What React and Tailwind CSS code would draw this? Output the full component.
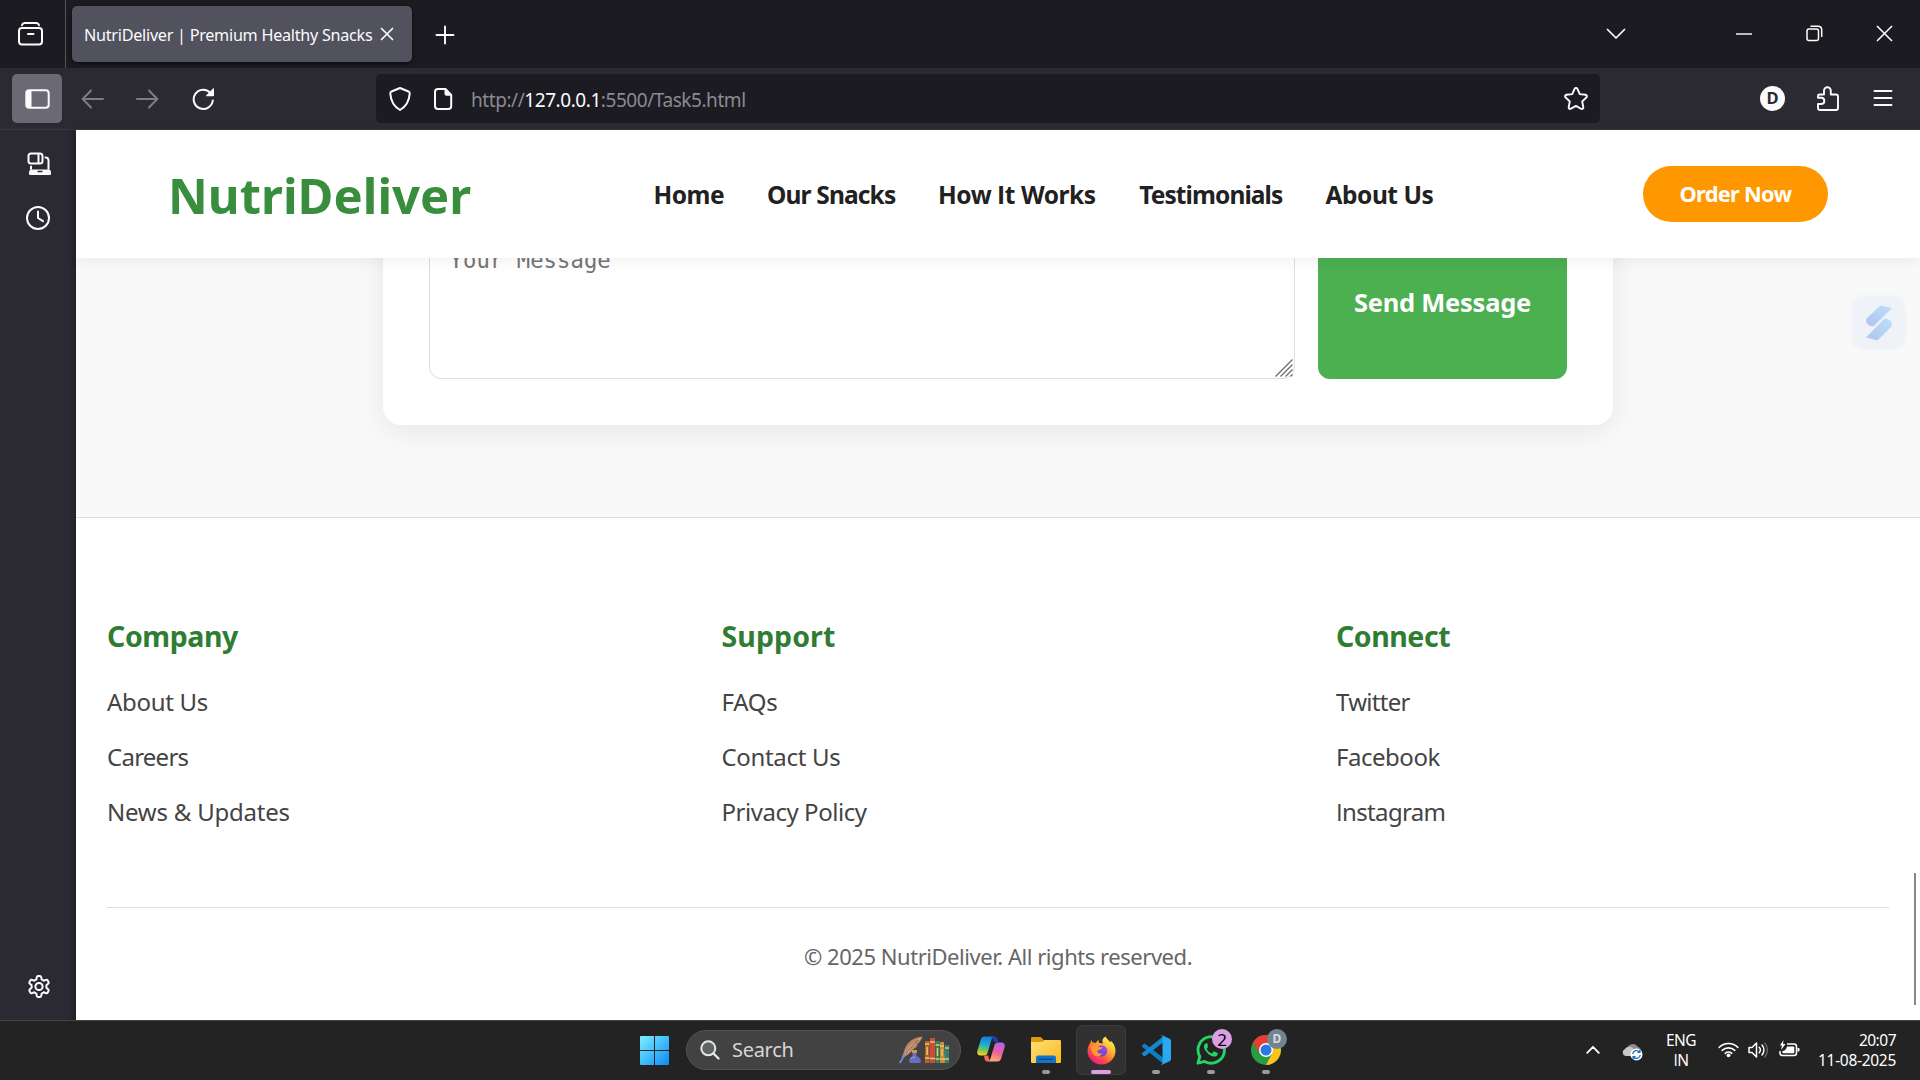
import React from "react";

function Svg({ w, h, vb, className = "", children }) {
  return (
    <svg
      width={w}
      height={h}
      viewBox={vb || `0 0 ${w} ${h}`}
      fill="none"
      className={`shrink-0 ${className}`}
    >
      {children}
    </svg>
  );
}

const line = {
  stroke: "#fbfbfe",
  strokeWidth: 2,
  strokeLinecap: "round",
  strokeLinejoin: "round",
};

// Capital I without serifs.
const I = () => <span className="font-['Open_Sans']">I</span>;

/* ---------- Browser chrome ---------- */

function TabBar() {
  return (
    <div className="flex h-[68px] items-center bg-[#1c1b22]">
      <div className="flex h-full w-[66px] items-center border-r border-[#53525a] pl-[17px]">
        <Svg w={27} h={26}>
          <path d="M5 4.200C5.500 2.600 6.400 2 8 2h11c1.600 0 2.500.6 3 2.200" {...line} />
          <rect x="2" y="7" width="23" height="16.500" rx="3" {...line} />
          <path d="M11 13h5.500" {...line} />
        </Svg>
      </div>
      <div className="ml-[6px] flex h-[56px] w-[340px] items-center rounded-[5px] bg-[#52525e] pl-[12px] shadow-[0_1px_4px_rgba(0,0,0,0.7)]">
        <span className="w-[296px] whitespace-nowrap pt-[1px] text-[16.2px] leading-[24px] tracking-[-0.27px] text-[#fbfbfe]">
          NutriDeliver | Premium Healthy Snacks
        </span>
        <Svg w={14} h={14}>
          <path d="M1.500 1.500l11 11M12.500 1.500l-11 11" {...line} strokeWidth={1.700} />
        </Svg>
      </div>
      <Svg w={20} h={20} className="ml-[23px] mt-[2px]">
        <path d="M10 1.500v17M1.500 10h17" {...line} strokeWidth={1.900} />
      </Svg>
      <div className="ml-auto flex items-center">
        <Svg w={20} h={12}>
          <path d="M1.500 1.500l8.500 8.500 8.500-8.500" {...line} strokeWidth={1.700} />
        </Svg>
        <Svg w={16} h={2} className="-mt-[1px] ml-[110px]">
          <path d="M0 1h16" stroke="#fff" strokeWidth="1.400" />
        </Svg>
        <Svg w={17} h={17} className="-mt-[1px] ml-[54px]">
          <rect x="1" y="4" width="11.500" height="11.500" rx="2" stroke="#fff" strokeWidth="1.500" />
          <path d="M4.500 1.200h7.500c2.200 0 3.700 1.500 3.700 3.700v7" stroke="#fff" strokeWidth="1.500" />
        </Svg>
        <Svg w={17} h={17} className="-mt-[1px] ml-[53px] mr-[27px]">
          <path d="M1 1l15 15M16 1L1 16" stroke="#fff" strokeWidth="1.500" />
        </Svg>
      </div>
    </div>
  );
}

function Toolbar() {
  return (
    <div className="flex h-[62px] items-center border-b border-[#38373f] bg-[#2b2a33]">
      <div className="ml-[12px] flex h-[49px] w-[50px] items-center justify-center rounded-[5px] bg-[#6a6974]">
        <Svg w={25} h={20}>
          <rect x="1.300" y="1.300" width="22.400" height="17.400" rx="3" {...line} />
          <path d="M1.500 3a2 2 0 012-2H6.500v18H3.500a2 2 0 01-2-2z" fill="#fbfbfe" />
        </Svg>
      </div>
      <Svg w={24} h={20} className="ml-[19px]">
        <path d="M22 10H2M10 1.500L1.700 10l8.300 8.500" {...line} stroke="#7d7c84" />
      </Svg>
      <Svg w={24} h={20} className="ml-[30px]">
        <path d="M2 10h20M14 1.500l8.300 8.500-8.300 8.500" {...line} stroke="#7d7c84" />
      </Svg>
      <Svg w={24} h={24} className="ml-[32.500px]">
        <path d="M20.800 13.500A9.600 9.600 0 1 1 18.500 6" {...line} />
        <path d="M21 1.500c.6-.5 1-.2 1 .5v6.500c0 .6-.3.800-.8.800H14.800c-.8 0-1-.5-.5-1z" fill="#fbfbfe" />
      </Svg>
      <div className="ml-[160.500px] flex h-[49px] w-[1224px] items-center rounded-[5px] bg-[#1c1b22] pl-[12px]">
        <Svg w={24} h={26}>
          <path
            d="M12 2l8.500 3.500c.8.300 1.300 1 1.200 2C21.300 14.500 18 20.500 12 24 6 20.500 2.700 14.500 2.300 7.500c-.1-1 .4-1.700 1.200-2z"
            {...line}
          />
        </Svg>
        <Svg w={20} h={24} className="ml-[21px]">
          <path d="M5 2h7.500L18.200 8v11a3 3 0 01-3 3H5a3 3 0 01-3-3V5a3 3 0 013-3z" {...line} />
          <path d="M11.500 2l6.700 6.700h-4.700a2 2 0 01-2-2z" fill="#fbfbfe" />
        </Svg>
        <span className="ml-[18px] whitespace-nowrap pt-[2px] text-[19px] leading-[28px] tracking-[-0.44px] text-[#8b8a92]">
          http://<span className="text-[#fbfbfe]">127.0.0.1</span>:5500/Task5.html
        </span>
        <Svg w={26} h={26} className="ml-auto mr-[11px]">
          <path
            d="M11.600 2.800c.6-1.200 2.200-1.200 2.800 0l2.400 5.300 5.700.7c1.400.2 1.900 1.800.9 2.700l-4.200 3.900 1.100 5.700c.3 1.300-1.100 2.300-2.300 1.600L13 19.900l-5 2.800c-1.200.7-2.600-.3-2.300-1.600l1.100-5.700-4.200-3.900c-1-.9-.5-2.500.9-2.700l5.700-.7z"
            {...line}
            strokeWidth={1.900}
          />
        </Svg>
      </div>
      <div className="ml-[160px] flex size-[25px] items-center justify-center rounded-full bg-[#fbfbfe] text-[16.500px] font-bold leading-none text-[#2b2a33]">
        D
      </div>
      <Svg w={24} h={28} className="ml-[31px]">
        <path
          d="M3.500 9.500H8V5.700a3.400 3.400 0 016.800 0v3.800H20a2 2 0 012 2V23a2 2 0 01-2 2H4a2 2 0 01-2-2v-4h3.200a3.100 3.100 0 000-6.200H2V11a1.500 1.500 0 011.500-1.500z"
          {...line}
          strokeWidth={1.900}
        />
      </Svg>
      <Svg w={20} h={18} className="-mt-[2px] ml-[33px]">
        <path d="M1.500 2h17M1.500 9h17M1.500 16h17" {...line} strokeWidth={1.900} />
      </Svg>
    </div>
  );
}

function Sidebar() {
  return (
    <div className="flex w-[76px] shrink-0 flex-col items-center bg-[linear-gradient(to_right,#2b2a33_68px,#232228_76px)] pt-[21px]">
      <Svg w={26} h={26} className="ml-[2px]">
        <rect x="2.500" y="2.500" width="14" height="10" rx="2.500" {...line} />
        <path d="M12.500 3v9" {...line} />
        <path d="M19.500 6.500c2.500 0 3 1 3 3V18M5 15.500V18" {...line} />
        <path d="M3 21.500c0-2 1-3 3-3h16c2 0 3 1 3 3v1c0 1-.6 1.500-1.500 1.500h-19c-.9 0-1.500-.5-1.500-1.500z" fill="#fbfbfe" />
        <path d="M11.500 20.500h5" stroke="#2b2a33" strokeWidth="1.500" />
      </Svg>
      <Svg w={26} h={26} className="mt-[27.500px]">
        <circle cx="13" cy="13" r="11" {...line} />
        <path d="M13 6.500V13l5 3.200" {...line} />
      </Svg>
      <Svg w={26} h={26} className="mb-[20.500px] ml-[1px] mt-auto">
        <path
          d="M10.700 3.400c.2-1 .7-1.400 1.500-1.400h1.600c.8 0 1.300.4 1.500 1.400l.4 2.100 2 1.200 2.100-.8c.9-.3 1.500-.1 1.900.6l.8 1.400c.4.700.3 1.300-.4 1.900l-1.700 1.500v2.400l1.700 1.500c.7.600.8 1.200.4 1.900l-.8 1.400c-.4.700-1 .9-1.900.6l-2.100-.8-2 1.200-.4 2.100c-.2 1-.7 1.400-1.500 1.400h-1.600c-.8 0-1.300-.4-1.500-1.400l-.4-2.100-2-1.200-2.100.8c-.9.300-1.500.1-1.900-.6l-.8-1.400c-.4-.7-.3-1.300.4-1.900l1.700-1.500v-2.400L3.900 9.800c-.7-.6-.8-1.200-.4-1.900l.8-1.400c.4-.7 1-.9 1.900-.6l2.100.8 2-1.200z"
          {...line}
        />
        <circle cx="13" cy="12.500" r="3.600" {...line} />
      </Svg>
    </div>
  );
}

/* ---------- Web page ---------- */

function SiteHeader() {
  return (
    <header className="relative z-10 flex h-[128px] shrink-0 items-center bg-white shadow-[0_3px_14px_rgba(0,0,0,0.06)]">
      <div className="ml-[92px] w-[485.500px] whitespace-nowrap pt-[1.500px] text-[49px] font-bold leading-[60px] tracking-[0.02px] text-[#388e3c]">
        NutriDeliver
      </div>
      <nav className="flex gap-[43px] whitespace-nowrap pt-[2px] text-[24.5px] font-bold leading-[34px] text-[#212121]">
        <a className="w-[70.5px] tracking-[-0.5px]">Home</a>
        <a className="w-[128px] tracking-[-0.85px]">Our Snacks</a>
        <a className="w-[158.200px] tracking-[-0.45px]">
          How <I />t Works
        </a>
        <a className="w-[143.300px] tracking-[-0.9px]">Testimonials</a>
        <a className="w-[108px] tracking-[-0.45px]">About Us</a>
      </nav>
      <button className="ml-auto mr-[92px] h-[56px] w-[185px] rounded-full bg-[#ff9800] text-[21.8px] font-bold tracking-[-0.7px] text-white">
        Order Now
      </button>
    </header>
  );
}

function ContactSection() {
  return (
    <section className="relative h-[260px] shrink-0 overflow-hidden border-b border-[#ddd] bg-[#f9f9f9]">
      <form className="mx-auto -mt-[40px] flex h-[207px] w-[1230px] rounded-b-[18px] bg-white px-[46px] pb-[46px] shadow-[0_6px_30px_rgba(0,0,0,0.08)]">
        <div className="relative w-[866px] rounded-b-[12px] border border-[#ddd] pl-[19.500px] pt-[28px] font-['DejaVu_Sans_Mono',monospace] text-[22.200px] leading-[26px] tracking-[0.080px] text-[#757575]">
          Your Message
          <Svg w={18} h={18} className="absolute bottom-[1px] right-[1px]">
            <path d="M.5 17.500l17-17M5.500 17.500l12-12M10.500 17.500l7-7M15.500 17.500l2-2" stroke="#6b6b6b" strokeWidth="1.300" />
          </Svg>
        </div>
        <div className="ml-[23px] flex w-[249px] items-center justify-center rounded-b-[12px] bg-[#4caf50] pt-[8px] text-[25.500px] font-bold tracking-[-0.250px] text-white">
          Send Message
        </div>
      </form>
      <div className="absolute right-[15px] top-[38px] flex size-[53px] items-center justify-center rounded-[12px] bg-[#eff3f7] shadow-[0_0_0_3px_#f6f7f9]">
        <Svg w={28} h={36}>
          <defs>
            <linearGradient id="wing" x1="0" y1="1" x2="1" y2="0">
              <stop offset="0" stopColor="#b3c3ee" />
              <stop offset="1" stopColor="#b8e0fa" />
            </linearGradient>
          </defs>
          <path d="M15.500.500L27 3 9 21C4 22.500 0 18 1.500 13.500z" fill="url(#wing)" />
          <path d="M12.500 35.500L1 32.500l18-18.500c5-1.500 9 3 7.500 7.500z" fill="url(#wing)" />
        </Svg>
      </div>
    </section>
  );
}

const columns = [
  {
    title: "Company",
    titleClass: "tracking-[-0.4px]",
    width: "w-[614.5px]",
    links: [
      ["About Us", "tracking-[-0.3px]"],
      ["Careers", "tracking-[-0.75px]"],
      ["News & Updates", "tracking-[-0.22px]"],
    ],
  },
  {
    title: "Support",
    titleClass: "tracking-[0.1px]",
    width: "w-[614.5px]",
    links: [
      ["FAQs", "tracking-[-0.3px]"],
      ["Contact Us", "tracking-[-0.33px]"],
      ["Privacy Policy", "tracking-[-0.46px]"],
    ],
  },
  {
    title: "Connect",
    titleClass: "tracking-[-0.45px]",
    width: "w-[400px]",
    links: [
      ["Twitter", "tracking-[-0.7px]"],
      ["Facebook", "tracking-[-0.48px]"],
      ["Instagram", "tracking-[-0.65px]"],
    ],
  },
];

function SiteFooter() {
  return (
    <footer className="relative flex-1 bg-white px-[31px] pt-[98px]">
      <div className="flex">
        {columns.map((col) => (
          <div key={col.title} className={col.width}>
            <h3 className={`text-[28.5px] font-bold leading-[40px] text-[#2e7d32] ${col.titleClass}`}>{col.title}</h3>
            <ul className="mt-[18px] text-[24px] leading-[55px] text-[#444]">
              {col.links.map(([label, cls]) => (
                <li key={label} className={cls}>
                  {label[0] === "I" ? (
                    <>
                      <I />
                      {label.slice(1)}
                    </>
                  ) : (
                    label
                  )}
                </li>
              ))}
            </ul>
          </div>
        ))}
      </div>
      <p className="mt-[68px] border-t border-[#ddd] pt-[27.500px] text-center text-[22px] leading-[40px] tracking-[-0.46px] text-[#666]">
        © 2025 NutriDeliver. All rights reserved.
      </p>
      <div className="absolute bottom-[15px] right-[4px] h-[132px] w-[2px] bg-[#878787]" />
    </footer>
  );
}

/* ---------- Taskbar ---------- */

function WindowsLogo() {
  return (
    <Svg w={29} h={29}>
      <defs>
        <linearGradient id="win" x1="0" y1="0" x2="29" y2="29" gradientUnits="userSpaceOnUse">
          <stop stopColor="#7df0ff" />
          <stop offset="1" stopColor="#0a8cf5" />
        </linearGradient>
      </defs>
      <path d="M0 1a1 1 0 011-1h13v14H0zM15 0h13a1 1 0 011 1v13H15zM0 15h14v14H1a1 1 0 01-1-1zM15 15h14v13a1 1 0 01-1 1H15z" fill="url(#win)" />
    </Svg>
  );
}

function QuillAndBooks() {
  return (
    <Svg w={51} h={28}>
      <path d="M23.500.500C15 1 7 6 4.500 17l-2 5C8 20 12 17 14 13.500c3-1.500 4.500-3.500 4.500-5.500 2.500-2 4-4 5-7.500z" fill="#b98763" />
      <path d="M22.500 1.500C14 6 9 12 4 21c5-3 7-6 8.500-9 3-2 4-4 4.500-5.500z" fill="#efc7a2" />
      <path d="M19 4C15 8 10 13 6.500 18.500" stroke="#9a6a48" strokeWidth="1.200" />
      <path d="M6.500 18.500C4.500 21 2.500 24 .8 27" stroke="#7387c9" strokeWidth="2" />
      <path d="M13 14h5v3h-5z" fill="#c99a55" />
      <path d="M13.500 17h4v3c3 1 4.500 3 4.300 5.500-.1 1-.8 1.500-1.800 1.500h-8c-1 0-1.700-.5-1.800-1.500C10 23 11 21 13.500 20z" fill="#6670c0" />
      <path d="M12 23c1-1.500 2-2 4-2" stroke="#a5afe8" />
      <path d="M26 5h4.500v22H26z" fill="#b5622d" />
      <path d="M31 2h5v25h-5z" fill="#cf4a3c" />
      <path d="M36.500 5h4v22h-4z" fill="#2f8a5a" />
      <path d="M41 6h4l1 21h-5z" fill="#c78a3f" />
      <path d="M46 9h4v18h-4z" fill="#22857a" />
      <path d="M26 8h4.500M26 22h4.500M31 6h5M31 22.500h5M36.500 9h4M36.500 23h4M41 10h4M41 23h5M46 12h4M46 23h4M28.200 11v8M38.500 12v8M43 13v7" stroke="#e8c766" strokeWidth="1.500" />
    </Svg>
  );
}

function Copilot() {
  return (
    <Svg w={28} h={26}>
      <defs>
        <linearGradient id="cpA" x1="8" y1="0" x2="5" y2="19" gradientUnits="userSpaceOnUse">
          <stop stopColor="#1277dd" />
          <stop offset=".45" stopColor="#1fb0d0" />
          <stop offset=".75" stopColor="#7cc552" />
          <stop offset="1" stopColor="#f5d321" />
        </linearGradient>
        <linearGradient id="cpB" x1="22" y1="6" x2="15" y2="25" gradientUnits="userSpaceOnUse">
          <stop stopColor="#b163ea" />
          <stop offset=".5" stopColor="#ed5f9f" />
          <stop offset="1" stopColor="#ffad68" />
        </linearGradient>
      </defs>
      <path d="M15 .5h2.500c1.500 0 2.300.8 2.800 2.200L21.500 6H17z" fill="#1d3fae" />
      <path d="M7.500.500H17c-1.500.5-2 1.500-2.500 3L10.500 17c-.5 1.500-1.500 2.500-3 2.500H3.500C.5 19.500-.3 17 .5 14.200L3.700 4C4.500 1.500 5.500.5 7.500.500z" fill="url(#cpA)" />
      <path d="M20.500 25.500H11c1.500-.5 2-1.500 2.500-3L17.500 9c.5-1.500 1.500-2.500 3-2.500h4c3 0 3.800 2.500 3 5.300L24.300 22c-.8 2.500-1.800 3.500-3.800 3.500z" fill="url(#cpB)" />
      <path d="M13 25.500h-2.500C9 25.500 8.200 24.700 7.700 23.300L7 19.500h4z" fill="#ef6d54" />
    </Svg>
  );
}

function Explorer() {
  return (
    <Svg w={30} h={28}>
      <defs>
        <linearGradient id="fold" x1="0" y1="4" x2="20" y2="27" gradientUnits="userSpaceOnUse">
          <stop stopColor="#ffe07a" />
          <stop offset="1" stopColor="#fcbf2b" />
        </linearGradient>
      </defs>
      <path d="M0 2.500C0 1.500.7 1 1.500 1h7c1 0 1.500.3 2.200 1l2 2H28c1 0 2 .7 2 2v6H0z" fill="#dd9a0b" />
      <path d="M0 6h10c1.500 0 2-.5 3-1.300.7-.6 1.300-.7 2-.7h13.500c1 0 1.500.6 1.500 1.500v20c0 1-.6 1.500-1.500 1.500h-27C.6 27 0 26.500 0 25.500z" fill="url(#fold)" />
      <path d="M5 27v-5c0-1.700 1-2.500 2.500-2.500h15c1.500 0 2.500.8 2.500 2.500v5z" fill="#1274c9" />
      <path d="M8.500 23.200h13" stroke="#0a4c92" strokeWidth="1.500" strokeLinecap="round" />
    </Svg>
  );
}

function Firefox() {
  return (
    <Svg w={29} h={29}>
      <defs>
        <linearGradient id="fx" x1="24" y1="3" x2="6" y2="27" gradientUnits="userSpaceOnUse">
          <stop stopColor="#fff14f" />
          <stop offset=".35" stopColor="#ffb02e" />
          <stop offset=".65" stopColor="#ff5a3c" />
          <stop offset="1" stopColor="#ee1683" />
        </linearGradient>
        <linearGradient id="fxo" x1="17" y1="7" x2="11" y2="21" gradientUnits="userSpaceOnUse">
          <stop stopColor="#b145f5" />
          <stop offset="1" stopColor="#5b48d2" />
        </linearGradient>
      </defs>
      <path
        d="M18.500.500c1 2 3.500 4 5 6 .3-.6.300-1.300.200-2 3 2.700 4.800 6.500 4.800 10.500C28.500 22.500 22.200 28.500 14.500 28.500S.5 22.500.5 15c0-3.500 1.500-6.500 3-8.500C3.600 5.500 4 4.500 4.700 4c0 1.200.4 2 1 2.500 1.300-.2 2.300 0 3.300.5C9.500 5.500 11 4.500 12 4.300c-.5.900-.5 1.700.2 2.700l4 .5C14.500 5 15.500 2 18.500.500z"
        fill="url(#fx)"
      />
      <circle cx="14.500" cy="15" r="5.800" fill="url(#fxo)" />
      <path d="M3.500 10.500c2.500-1.500 5.500-1.500 8 .2 1.300.9 2.800.6 4 .6-.5 1.500-2 2.300-3.600 2.600-1.200.2-1.900 1-1.400 2 .8 1.700 3 2 5 1-1.500 3.500-6 4.500-8.500 2C5 17.500 4.500 14 3.500 10.500z" fill="#ff9a2e" />
    </Svg>
  );
}

function VsCode() {
  return (
    <Svg w={30} h={30}>
      <path d="M1 10.800l1.500-1.500c.7-.6 1.400-.6 2.100-.1L22 22.500v6L1 11.800c-.3-.3-.3-.7 0-1z" fill="#0d7ec4" />
      <path d="M1 19.200l1.500 1.500c.7.600 1.400.6 2.100.1L22 7.500v-6L1 18.200c-.3.300-.3.700 0 1z" fill="#1389d2" />
      <path d="M21.500.500l7 3.200c.9.500 1.500 1.200 1.500 2.300v18c0 1.100-.6 1.800-1.500 2.300l-7 3.200c-.8.300-1.500.1-2-.5.9.6 2 .2 2-1.200V2.200c0-1.400-1.100-1.800-2-1.200.5-.6 1.200-.8 2-.5z" fill="#2aa9f2" />
    </Svg>
  );
}

function WhatsApp() {
  return (
    <Svg w={30} h={30}>
      <path d="M2 28.200l1.800-6.700A13.200 13.200 0 1 1 8.700 26.400z" stroke="#25d366" strokeWidth="2.900" strokeLinejoin="round" />
      <path
        d="M10.800 8.300c-.8-.2-1.600.2-2.100.9-1.400 1.900-.7 4.300.7 6.400 1.700 2.600 4 4.600 6.900 5.600 2 .7 4 .4 5-1 .5-.8.6-1.700.3-2.100-.2-.3-2.700-1.600-3.200-1.700-.4-.1-.7 0-1 .4l-1.100 1.400c-.3.300-.6.300-1 .1-2-.9-3.400-2.100-4.500-4-.2-.4-.1-.6.1-.9l.8-1c.2-.3.200-.6.100-.9L11.600 8.800c-.2-.3-.4-.5-.8-.5z"
        fill="#25d366"
      />
    </Svg>
  );
}

function Chrome() {
  return (
    <Svg w={30} h={30} vb="-15 -15 30 30">
      <circle r="15" fill="#2b9a47" />
      <path d="M0 -7H13.200A15 15 0 0 1 0 15L6.100 3.500z" fill="#fcc31e" />
      <path d="M-6.100 3.500L-13 -7.500A15 15 0 0 1 13.200 -7H0z" fill="#ea3d2f" />
      <circle r="7" fill="#fff" />
      <circle r="5.500" fill="#2a78e8" />
    </Svg>
  );
}

function TaskItem({ ml, pill, active, badge, children }) {
  return (
    <div
      className={`relative flex h-[50px] w-[50px] shrink-0 flex-col items-center justify-center rounded-[6px] border ${ml} ${
        active ? "border-[#3b3b3b] bg-[#313131]" : "border-transparent"
      }`}
    >
      {children}
      {badge}
      {pill && <div className={`absolute bottom-0 h-[4px] rounded-full ${pill}`} />}
    </div>
  );
}

function Taskbar() {
  return (
    <div className="flex h-[60px] items-center border-t border-[#444] bg-[#232323] pb-[1px] pl-[640px] text-white">
      <WindowsLogo />
      <div className="ml-[17px] flex h-[40px] w-[275px] shrink-0 items-center rounded-full border border-[#545454] bg-[#424242] pl-[13px] pr-[10px]">
        <Svg w={20} h={20}>
          <circle cx="8.300" cy="8.300" r="7" stroke="#e8e8e8" strokeWidth="2" fill="#5e6366" />
          <path d="M13.500 13.500l5 5" stroke="#e8e8e8" strokeWidth="2.400" strokeLinecap="round" />
        </Svg>
        <span className="ml-[12px] text-[20px] leading-[28px] tracking-[-0.3px] text-[#d6d6d6]">Search</span>
        <div className="ml-auto">
          <QuillAndBooks />
        </div>
      </div>
      <div className="ml-[16px] pb-[2px]">
        <Copilot />
      </div>
      <TaskItem ml="ml-[16px]" pill="w-[8px] bg-[#9b9b9b]">
        <Explorer />
      </TaskItem>
      <TaskItem ml="ml-[5px]" active pill="w-[20px] bg-[#dd9fe3]">
        <Firefox />
      </TaskItem>
      <TaskItem ml="ml-[5px]" pill="w-[8px] bg-[#9b9b9b]">
        <VsCode />
      </TaskItem>
      <TaskItem
        ml="ml-[5px]"
        pill="w-[8px] bg-[#9b9b9b]"
        badge={
          <div className="absolute left-[25px] top-[3px] flex size-[20px] items-center justify-center rounded-full bg-[#dd9fe3] text-[17px] leading-none text-black">
            2
          </div>
        }
      >
        <WhatsApp />
      </TaskItem>
      <TaskItem
        ml="ml-[5px]"
        pill="w-[8px] bg-[#9b9b9b]"
        badge={
          <div className="absolute left-[25px] top-[3px] flex size-[20px] items-center justify-center rounded-full bg-[#72848f] text-[12px] font-bold leading-none text-[#d5dde1]">
            D
          </div>
        }
      >
        <Chrome />
      </TaskItem>
      <div className="ml-auto flex items-center pb-[1px]">
        <Svg w={14} h={9}>
          <path d="M1.200 7.800L7 1.800l5.800 6" stroke="#fff" strokeWidth="1.800" strokeLinecap="round" strokeLinejoin="round" />
        </Svg>
        <Svg w={21} h={19} className="ml-[22px] mt-[3px]">
          <path d="M5 7a6 6 0 0111-2c2 .5 3 2 3 4l-6 5z" fill="#8d8d8d" />
          <path d="M3.500 14A3.700 3.700 0 013 7a5 5 0 018.500 0l4 5-3 2z" fill="#c9c9c9" />
          <circle cx="14.500" cy="12.500" r="6" fill="#fff" />
          <path d="M10.700 12a4 4 0 017-2M18.300 13a4 4 0 01-7 2M17.900 7.800v2.500h-2.500M11.100 17.200v-2.500h2.500" stroke="#1670c5" strokeWidth="1.300" />
        </Svg>
        <div className="ml-[18px] w-[40px] text-center text-[15.5px] leading-[20px] tracking-[-0.5px]">
          <div>ENG</div>
          <div>
            <I />N
          </div>
        </div>
        <Svg w={21} h={17} className="ml-[17px]">
          <path d="M1.200 6.400a13.200 13.200 0 0118.600 0M4.200 9.400a9 9 0 0112.600 0M7.200 12.300a4.900 4.900 0 016.600 0" stroke="#fff" strokeWidth="1.600" strokeLinecap="round" />
          <circle cx="10.500" cy="14.300" r="1.900" fill="#fff" />
        </Svg>
        <Svg w={21} h={18} className="ml-[9px]">
          <path d="M1 6.500h3L8.500 2v14L4 11.500H1z" stroke="#fff" strokeWidth="1.500" strokeLinejoin="round" />
          <path d="M11.200 6.300a4 4 0 010 5.400M14 4a7.500 7.500 0 010 10" stroke="#fff" strokeWidth="1.500" strokeLinecap="round" />
          <path d="M16.800 2a11 11 0 010 14" stroke="#666" strokeWidth="1.500" strokeLinecap="round" />
        </Svg>
        <Svg w={21} h={17} className="-mt-[2px] ml-[10px]">
          <path d="M8 4h7c1.500 0 2.500 1 2.500 2.500v6.500c0 1.500-1 2.500-2.500 2.500H3.500C2 15.500 1 14.500 1 13V11" stroke="#fff" strokeWidth="1.500" />
          <path d="M8 6.500h6.500c.5 0 .8.300.8.800V12.500c0 .5-.3.800-.8.800H4.200c-.5 0-.8-.3-.8-.8v-1.500c2 0 4-1.500 4.600-4.500z" fill="#fff" />
          <path d="M18.500 8h1c.5 0 1 .3 1 1v1.500c0 .7-.5 1-1 1h-1z" fill="#fff" />
          <path d="M4.500 0L1 5.500h2L2 10l4.500-6H4z" fill="#fff" />
        </Svg>
        <div className="ml-[13px] mr-[24px] w-[83px] text-right text-[15.5px] leading-[20px]">
          <div className="tracking-[-0.5px]">20:07</div>
          <div className="tracking-[-0.29px]">11-08-2025</div>
        </div>
      </div>
    </div>
  );
}

export default function App() {
  return (
    <div className="flex h-[1080px] w-[1920px] flex-col overflow-hidden bg-white font-['Noto_Sans','Open_Sans',sans-serif]">
      <TabBar />
      <Toolbar />
      <div className="flex h-[890px]">
        <Sidebar />
        <main className="flex flex-1 flex-col">
          <SiteHeader />
          <ContactSection />
          <SiteFooter />
        </main>
      </div>
      <Taskbar />
    </div>
  );
}
